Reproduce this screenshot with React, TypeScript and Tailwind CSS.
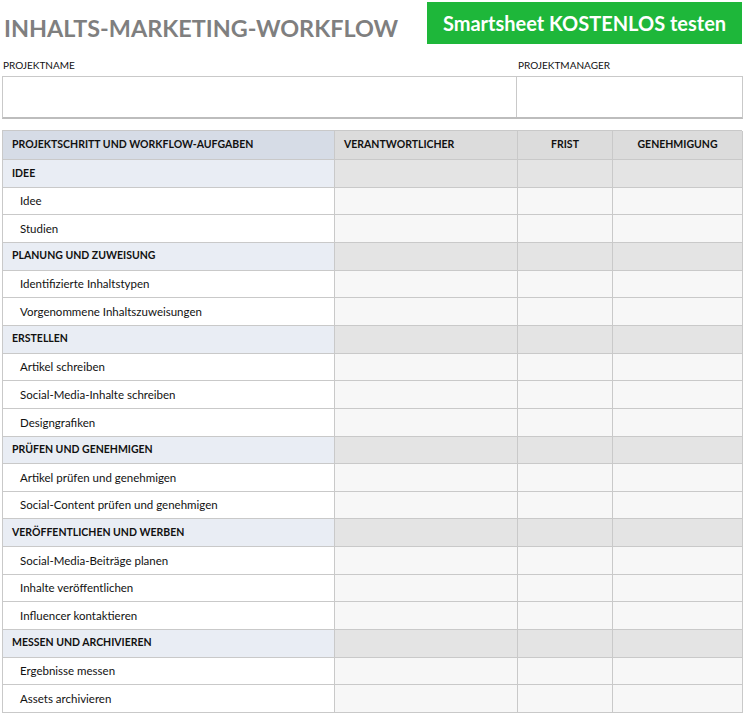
import React from "react";

const sections: [string, string[]][] = [
  ["IDEE", ["Idee", "Studien"]],
  ["PLANUNG UND ZUWEISUNG", ["Identifizierte Inhaltstypen", "Vorgenommene Inhaltszuweisungen"]],
  ["ERSTELLEN", ["Artikel schreiben", "Social-Media-Inhalte schreiben", "Designgrafiken"]],
  ["PRÜFEN UND GENEHMIGEN", ["Artikel prüfen und genehmigen", "Social-Content prüfen und genehmigen"]],
  ["VERÖFFENTLICHEN UND WERBEN", ["Social-Media-Beiträge planen", "Inhalte veröffentlichen", "Influencer kontaktieren"]],
  ["MESSEN UND ARCHIVIEREN", ["Ergebnisse messen", "Assets archivieren"]],
];

const cell = "border-r border-b border-[#c9c9c9] flex items-center";

export default function App() {
  return (
    <div className="w-[745px] h-[719px] bg-white text-[#111] overflow-hidden" style={{ fontFamily: "Lato, 'Open Sans', sans-serif" }}>
      <div className="flex items-start justify-between pl-[4px] pr-[3px] pt-[2px]">
        <div className="text-[23.4px] font-bold text-[#7f7f7f] mt-[9px]">INHALTS-MARKETING-WORKFLOW</div>
        <div className="w-[315px] h-[42px] bg-[#1eb73a] text-white text-[20px] font-bold flex items-center justify-center">Smartsheet KOSTENLOS testen</div>
      </div>
      <div className="flex mt-[12px] px-[2px] text-[10px]">
        <div className="w-[515px] pl-[1px]">PROJEKTNAME</div>
        <div className="pl-[1px]">PROJEKTMANAGER</div>
      </div>
      <div className="flex mx-[2px] mt-[3px] h-[43px] border border-[#c9c9c9] border-b-2 border-b-[#bdbdbd]">
        <div className="w-[514px] border-r border-[#c9c9c9]" />
        <div className="flex-1" />
      </div>
      <div className="mx-[2px] mt-[11px] w-[740px] border-l border-t border-[#c9c9c9] grid grid-cols-[332px_183px_95px_130px] text-[11.5px]">
        <div className={`${cell} h-[29px] bg-[#d6dce6] font-bold pl-[9px] text-[10.5px]`}>PROJEKTSCHRITT UND WORKFLOW-AUFGABEN</div>
        <div className={`${cell} h-[29px] bg-[#dcdcdc] font-bold pl-[9px] text-[10.5px]`}>VERANTWORTLICHER</div>
        <div className={`${cell} h-[29px] bg-[#dcdcdc] font-bold justify-center text-[10.5px]`}>FRIST</div>
        <div className={`${cell} h-[29px] bg-[#dcdcdc] font-bold justify-center text-[10.5px]`}>GENEHMIGUNG</div>
        {sections.map(([s, items]) => (
          <React.Fragment key={s}>
            <div className={`${cell} h-[27.65px] bg-[#e9edf4] font-bold pl-[9px] text-[10.5px]`}>{s}</div>
            <div className={`${cell} h-[27.65px] bg-[#e4e4e4]`} />
            <div className={`${cell} h-[27.65px] bg-[#e4e4e4]`} />
            <div className={`${cell} h-[27.65px] bg-[#e4e4e4]`} />
            {items.map((it) => (
              <React.Fragment key={it}>
                <div className={`${cell} h-[27.65px] bg-white pl-[17px]`}>{it}</div>
                <div className={`${cell} h-[27.65px] bg-[#f7f7f7]`} />
                <div className={`${cell} h-[27.65px] bg-[#f7f7f7]`} />
                <div className={`${cell} h-[27.65px] bg-[#f7f7f7]`} />
              </React.Fragment>
            ))}
          </React.Fragment>
        ))}
      </div>
    </div>
  );
}
